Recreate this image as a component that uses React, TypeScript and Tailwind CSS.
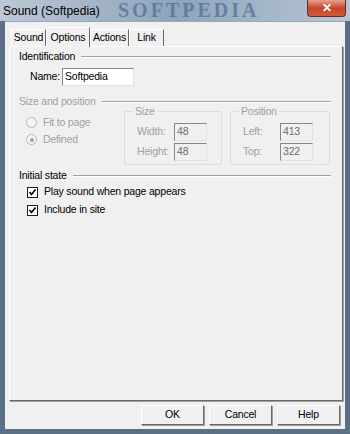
const font = { fontFamily: '"Liberation Sans", Arial, sans-serif', letterSpacing: "-0.2px" };

const Header = ({ label, disabled }: { label: string; disabled?: boolean }) => (
  <div className="flex items-center h-[14px]">
    <span className={disabled ? "text-[#a0a0a0]" : "text-black"}>{label}</span>
    <div className="flex-1 ml-[6px] mr-[1px] border-t border-[#a0a0a0] border-b-white border-b h-0" />
  </div>
);

const Field = ({ value, disabled, w }: { value: string; disabled?: boolean; w: string }) => (
  <div
    className={`${w} h-[18px] border border-t-[#828790] border-l-[#828790] border-r-[#e3e3e3] border-b-[#e3e3e3] px-[2px] flex items-center ${
      disabled ? "bg-[#f0f0f0] text-[#6d6d6d]" : "bg-white text-black"
    }`}
  >
    {value}
  </div>
);

const Box = ({ title, w, rows }: { title: string; w: string; rows: [string, string][] }) => (
  <div className={`relative ${w} h-[54px] border border-[#d5dfe5] rounded-[2px] pt-[10px] pl-[12px]`}>
    <span className="absolute -top-[8px] left-[8px] px-[2px] bg-[#f0f0f0] text-[#a0a0a0]">{title}</span>
    {rows.map(([l, v]) => (
      <div key={l} className="flex items-center h-[20px]">
        <span className="w-[37px] text-[#a0a0a0]">{l}</span>
        <Field value={v} disabled w="w-[33px]" />
      </div>
    ))}
  </div>
);

const Check = ({ label }: { label: string }) => (
  <div className="flex items-center h-[18px]">
    <div className="w-[11px] h-[11px] bg-white border border-[#1c1c1c] flex items-center justify-center">
      <svg width="9" height="9" viewBox="0 0 9 9">
        <path d="M1.5 4 L3.5 6.5 L7.5 1.5" stroke="#000" strokeWidth="1.6" fill="none" />
      </svg>
    </div>
    <span className="ml-[6px]">{label}</span>
  </div>
);

const Radio = ({ label, checked }: { label: string; checked?: boolean }) => (
  <div className="flex items-center h-[17px]">
    <div className="w-[11px] h-[11px] rounded-full border border-[#b8b8b8] bg-[#f4f4f4] flex items-center justify-center">
      {checked && <div className="w-[4px] h-[4px] rounded-full bg-[#a0a0a0]" />}
    </div>
    <span className="ml-[6px] text-[#a0a0a0]">{label}</span>
  </div>
);

const Tab = ({ label, active, w }: { label: string; active?: boolean; w: string }) => (
  <div
    className={`${w} flex items-center justify-center border border-b-0 border-l-white border-t-white border-r-[#696969] ${
      active ? "h-[20px] relative z-10 -mb-[1px] bg-[#f0f0f0]" : "h-[17px]"
    }`}
  >
    {label}
  </div>
);

const Btn = ({ label }: { label: string }) => (
  <div className="w-[63px] h-[20px] flex items-center justify-center bg-[#f0f0f0] border border-t-white border-l-white border-r-[#696969] border-b-[#696969] shadow-[1px_1px_0_#a0a0a0]">
    {label}
  </div>
);

export default function App() {
  return (
    <div className="w-[350px] h-[434px] bg-[#5b6f86] flex flex-col text-[10px] text-black" style={font}>
      <div className="relative h-[21px] bg-gradient-to-r from-[#bcc8d5] via-[#8ea4bc] to-[#b8c6d4] flex items-center overflow-hidden">
        <span
          className="absolute left-[118px] top-0 text-[20px] leading-[20px] font-bold tracking-[3px] text-[#4d6d93] opacity-70"
          style={{ fontFamily: '"Liberation Serif", serif' }}
        >
          SOFTPEDIA
        </span>
        <span className="relative ml-[3px] text-[12px] text-black tracking-normal">Sound (Softpedia)</span>
        <div className="absolute right-[4px] top-0 w-[39px] h-[17px] rounded-b-[4px] bg-gradient-to-b from-[#e5a08f] via-[#c5452b] to-[#d4593b] border border-[#6b2a1e] border-t-0 flex items-center justify-center">
          <span className="text-white font-bold text-[12px] leading-none">✕</span>
        </div>
      </div>
      <div className="flex-1 mx-[5px] mb-[5px] bg-[#f0f0f0] border-t border-[#9aa7b5] flex flex-col pt-[5px] pl-[4px] pr-[2px] text-[10.5px]">
        <div className="flex items-end h-[19px] pl-[2px]">
          <Tab label="Sound" w="w-[35px]" />
          <Tab label="Options" active w="w-[44px]" />
          <Tab label="Actions" w="w-[39px]" />
          <Tab label="Link" w="w-[35px]" />
        </div>
        <div className="h-[355px] border border-t-white border-l-white border-r-[#696969] border-b-[#696969] shadow-[1px_1px_0_#a0a0a0] pt-[3px] pl-[9px] pr-[10px]">
          <Header label="Identification" />
          <div className="flex items-center h-[18px] mt-[4px] pl-[11px]">
            <span className="w-[32px]">Name:</span>
            <Field value="Softpedia" w="w-[72px]" />
          </div>
          <div className="mt-[9px]">
            <Header label="Size and position" disabled />
          </div>
          <div className="flex mt-[2px]">
            <div className="w-[105px] pl-[7px] pt-[3px]">
              <Radio label="Fit to page" />
              <Radio label="Defined" checked />
            </div>
            <Box title="Size" w="w-[98px]" rows={[["Width:", "48"], ["Height:", "48"]]} />
            <div className="w-[8px]" />
            <Box title="Position" w="w-[100px]" rows={[["Left:", "413"], ["Top:", "322"]]} />
          </div>
          <div className="mt-[4px]">
            <Header label="Initial state" />
          </div>
          <div className="pl-[8px]">
            <Check label="Play sound when page appears" />
            <Check label="Include in site" />
          </div>
        </div>
        <div className="flex justify-end gap-[5px] pr-[3px] mt-[4px]">
          <Btn label="OK" />
          <Btn label="Cancel" />
          <Btn label="Help" />
        </div>
      </div>
    </div>
  );
}
